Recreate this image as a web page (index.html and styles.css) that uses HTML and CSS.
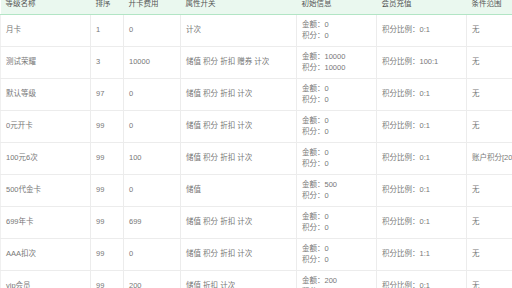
FILE: index.html
```html
<!DOCTYPE html>
<html lang="zh">
<head>
<meta charset="utf-8">
<link rel="stylesheet" href="styles.css">
</head>
<body>
<div class="wrap">
<table class="grid">
  <colgroup>
    <col class="c1"><col class="c2"><col class="c3"><col class="c4"><col class="c5"><col class="c6"><col class="c7">
  </colgroup>
  <thead>
    <tr><th>等级名称</th><th>排序</th><th>开卡费用</th><th>属性开关</th><th>初始信息</th><th>会员充值</th><th>条件范围</th></tr>
  </thead>
  <tbody>
    <tr><td>月卡</td><td>1</td><td>0</td><td>计次</td><td>金额：0<br>积分：0</td><td>积分比例：0:1</td><td>无</td></tr>
    <tr><td>测试荣耀</td><td>3</td><td>10000</td><td>储值 积分 折扣 赠券 计次</td><td>金额：10000<br>积分：10000</td><td>积分比例：100:1</td><td>无</td></tr>
    <tr><td>默认等级</td><td>97</td><td>0</td><td>储值 积分 折扣 计次</td><td>金额：0<br>积分：0</td><td>积分比例：0:1</td><td>无</td></tr>
    <tr><td>0元开卡</td><td>99</td><td>0</td><td>储值 积分 折扣 计次</td><td>金额：0<br>积分：0</td><td>积分比例：0:1</td><td>无</td></tr>
    <tr><td>100元6次</td><td>99</td><td>100</td><td>储值 积分 折扣 计次</td><td>金额：0<br>积分：0</td><td>积分比例：0:1</td><td class="nowrap">账户积分[200]</td></tr>
    <tr><td>500代金卡</td><td>99</td><td>0</td><td>储值</td><td>金额：500<br>积分：0</td><td>积分比例：0:1</td><td>无</td></tr>
    <tr><td>699年卡</td><td>99</td><td>699</td><td>储值 积分 折扣 计次</td><td>金额：0<br>积分：0</td><td>积分比例：0:1</td><td>无</td></tr>
    <tr><td>AAA扣次</td><td>99</td><td>0</td><td>储值 积分 折扣 计次</td><td>金额：0<br>积分：0</td><td>积分比例：1:1</td><td>无</td></tr>
    <tr><td>vip会员</td><td>99</td><td>200</td><td>储值 折扣 计次</td><td>金额：200<br>积分：0</td><td>积分比例：0:1</td><td>无</td></tr>
  </tbody>
</table>
</div>
</body>
</html>
```
FILE: styles.css
```css
html, body {
  margin: 0;
  padding: 0;
  background: #fff;
  overflow: hidden;
  width: 512px;
  height: 288px;
}
.wrap {
  margin-top: -6px;
  width: 600px;
}
.grid {
  border-collapse: collapse;
  table-layout: fixed;
  width: 566px;
  font-family: "Liberation Sans", "Noto Sans CJK SC", sans-serif;
  font-size: 7.5px;
  line-height: 10.4px;
  color: #777;
}
.c1 { width: 90px; }
.c2 { width: 33px; }
.c3 { width: 57px; }
.c4 { width: 116px; }
.c5 { width: 80px; }
.c6 { width: 90px; }
.c7 { width: 100px; }
.grid th {
  background: #eaf8ef;
  color: #555;
  font-weight: normal;
  text-align: left;
  height: 20px;
  padding: 0 5px;
  border-bottom: 1px solid #b2e5c5;
  white-space: nowrap;
}
.grid td {
  padding: 5px 5px;
  height: 21px;
  border: 1px solid #ececec;
  border-top: none;
  vertical-align: middle;
  white-space: nowrap;
  overflow: hidden;
}
.grid td:first-child {
  border-left: 1px solid #f0f0f0;
}
```
